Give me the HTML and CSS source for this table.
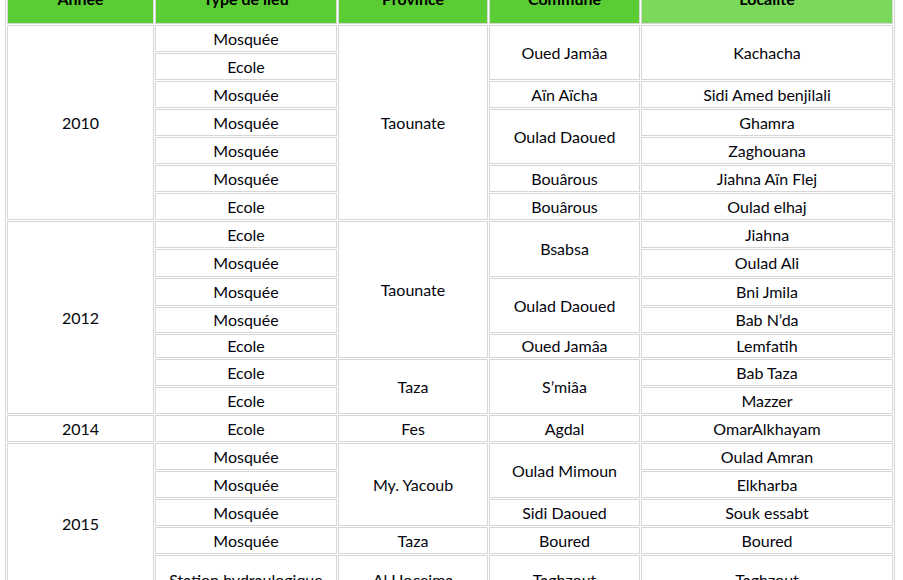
FILE: index.html
```html
<!DOCTYPE html>
<html lang="fr">
<head>
<meta charset="utf-8">
<title>Tableau</title>
<link rel="stylesheet" href="styles.css">
</head>
<body>
<table class="grid">
  <colgroup>
    <col class="c1"><col class="c2"><col class="c3"><col class="c4"><col class="c5">
  </colgroup>
  <thead>
    <tr class="head">
      <th>Année</th><th>Type de lieu</th><th>Province</th><th>Commune</th><th class="alt">Localité</th>
    </tr>
  </thead>
  <tbody>
    <tr><td rowspan="7">2010</td><td>Mosquée</td><td rowspan="7">Taounate</td><td rowspan="2">Oued Jamâa</td><td rowspan="2">Kachacha</td></tr>
    <tr><td>Ecole</td></tr>
    <tr><td>Mosquée</td><td>Aïn Aïcha</td><td>Sidi Amed benjilali</td></tr>
    <tr><td>Mosquée</td><td rowspan="2">Oulad Daoued</td><td>Ghamra</td></tr>
    <tr><td>Mosquée</td><td>Zaghouana</td></tr>
    <tr><td>Mosquée</td><td>Bouârous</td><td>Jiahna Aïn Flej</td></tr>
    <tr><td>Ecole</td><td>Bouârous</td><td>Oulad elhaj</td></tr>

    <tr><td rowspan="7">2012</td><td>Ecole</td><td rowspan="5">Taounate</td><td rowspan="2">Bsabsa</td><td>Jiahna</td></tr>
    <tr class="plus"><td>Mosquée</td><td>Oulad Ali</td></tr>
    <tr class="plus"><td>Mosquée</td><td rowspan="2">Oulad Daoued</td><td>Bni Jmila</td></tr>
    <tr class="short"><td>Mosquée</td><td>Bab N’da</td></tr>
    <tr class="shorter"><td>Ecole</td><td>Oued Jamâa</td><td>Lemfatih</td></tr>
    <tr><td>Ecole</td><td rowspan="2">Taza</td><td rowspan="2">S’miâa</td><td>Bab Taza</td></tr>
    <tr><td>Ecole</td><td>Mazzer</td></tr>

    <tr><td>2014</td><td>Ecole</td><td>Fes</td><td>Agdal</td><td>OmarAlkhayam</td></tr>

    <tr><td rowspan="5">2015</td><td>Mosquée</td><td rowspan="3">My. Yacoub</td><td rowspan="2">Oulad Mimoun</td><td>Oulad Amran</td></tr>
    <tr><td>Mosquée</td><td>Elkharba</td></tr>
    <tr><td>Mosquée</td><td>Sidi Daoued</td><td>Souk essabt</td></tr>
    <tr><td>Mosquée</td><td>Taza</td><td>Boured</td><td>Boured</td></tr>
    <tr class="tall"><td>Station hydraulogique</td><td>Al Hoceima</td><td>Taghzout</td><td>Taghzout</td></tr>
  </tbody>
</table>
</body>
</html>
```
FILE: styles.css
```css
html, body {
  margin: 0;
  padding: 0;
  background: #ffffff;
}

body {
  overflow: hidden;
  font-family: Lato, "Open Sans", "Liberation Sans", sans-serif;
  font-size: 16px;
  color: #05050d;
}

.grid {
  margin: -18px 0 0 5px;
  width: 890px;
  table-layout: fixed;
  border-collapse: separate;
  border-spacing: 1px;
  border: 1px solid #d6d6d6;
}

.c1 { width: 147px; }
.c2 { width: 182px; }
.c3 { width: 150px; }
.c4 { width: 151px; }
.c5 { width: 252px; }

.grid th,
.grid td {
  border: 1px solid #d6d6d6;
  text-align: center;
  vertical-align: middle;
  line-height: 20px;
  padding: 0;
  white-space: nowrap;
}

.grid th {
  background: #5bcd34;
  font-weight: 700;
  color: #000;
  padding-bottom: 11px;
}

.grid th.alt {
  background: #7ad85b;
}

.head { height: 40px; }

.grid tbody tr { height: 27px; }
.grid tbody tr.plus { height: 28px; }
.grid tbody tr.short { height: 26px; }
.grid tbody tr.shorter { height: 24px; }
.grid tbody tr.tall { height: 50px; }
```
